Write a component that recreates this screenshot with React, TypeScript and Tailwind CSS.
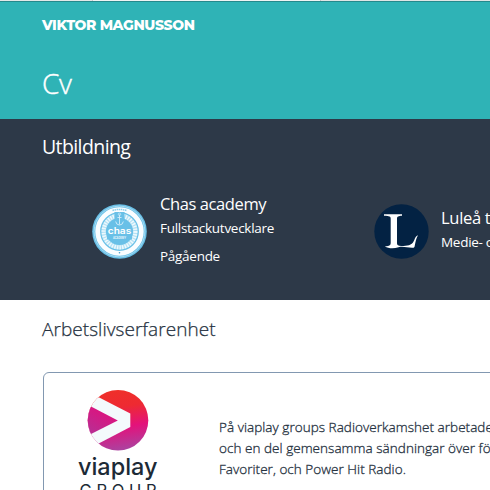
const sans = "font-['Open_Sans','Liberation_Sans',sans-serif]";

function ChasLogo() {
  return (
    <svg className="block h-[55px] w-[55px] shrink-0" viewBox="0 0 55 55">
      <circle cx="27.5" cy="27.500" r="27.300" fill="#69c0e7" />
      <circle cx="27.500" cy="27.500" r="25.400" fill="none" stroke="#a5daf1" strokeWidth="1" />
      <circle cx="27.500" cy="27.500" r="21.800" fill="none" stroke="#fafdff" strokeWidth="4.800" />
      <circle cx="27.500" cy="27.500" r="15.900" fill="none" stroke="#b5e1f4" strokeWidth="4.600" />
      <circle cx="27.500" cy="27.500" r="15.900" fill="none" stroke="#eef9fd" strokeWidth="4" strokeDasharray="1.400 1.200" />
      <path d="M22.500 8h10v12h-10z" fill="#69c0e7" />
      <path d="M20.500 6.500q7-2.200 14 0" fill="none" stroke="#8dcfeb" strokeWidth="1.500" strokeDasharray="1.500 0.600" />
      <path d="M27.500 10.500v10M25.500 13.500h4M23.700 17.500q.5 3.500 3.800 3.500t3.800-3.500" fill="none" stroke="#d4eefa" strokeWidth=".9" />
      <circle cx="27.500" cy="10.300" r="1.200" fill="none" stroke="#d4eefa" strokeWidth=".7" />
      <path d="M15 22.500h25v13H15z" fill="#69c0e7" />
      <text x="27.500" y="30" textAnchor="middle" textLength="23.500" lengthAdjust="spacingAndGlyphs" fill="#fff" className="font-['Inter',sans-serif] text-[9px] font-semibold">chas</text>
      <text x="27.500" y="35" textAnchor="middle" textLength="13" lengthAdjust="spacingAndGlyphs" fill="#e4f5fc" className="font-['Inter',sans-serif] text-[4px] font-bold">ACADEMY</text>
      <circle cx="27.500" cy="48.800" r=".8" fill="#419cc5" />
    </svg>
  );
}

function LuleaLogo() {
  return (
    <svg className="block h-[55px] w-[55px] shrink-0" viewBox="0 0 55 55">
      <circle cx="27.5" cy="27.5" r="27.2" fill="#032243" />
      <path
        d="M10 10.3h18v1.4c-3.5.2-5 .6-5 3v24.5c0 2 1.2 2.6 4.2 2.7 7.2.4 11.3-.8 13.2-6.1.8-2.2 1.5-3.6 3.6-4.5-2 3.500-2.300 6.200-3.400 11.200-.2.9-.8 1.300-1.800 1.300-5.200.2-9.500-1.800-14.300-.5-4.800 1.300-9.900 1.400-13.700-1.100 2.500 0 4.500-.4 5.300-1.300.5-.5.6-1.200.6-2.200V14.700c0-2.300-1-2.900-6.700-3z"
        fill="#fff"
      />
    </svg>
  );
}

function ViaplayLogo() {
  return (
    <svg className="block h-[101px] w-[82px] shrink-0" viewBox="0 0 82 101">
      <defs>
        <linearGradient id="viaplayTop" x1=".35" y1="0" x2=".55" y2="1">
          <stop offset="0" stopColor="#ef3029" />
          <stop offset=".3" stopColor="#ee2a32" />
          <stop offset=".62" stopColor="#e3127b" />
          <stop offset="1" stopColor="#a944a1" />
        </linearGradient>
        <linearGradient id="viaplayInner" x1=".8" y1="0" x2=".2" y2="1">
          <stop offset="0" stopColor="#e60c79" />
          <stop offset="1" stopColor="#b72f94" />
        </linearGradient>
        <clipPath id="viaplayDisc"><circle cx="41" cy="30.3" r="30.3" /></clipPath>
      </defs>
      <g clipPath="url(#viaplayDisc)">
        <path d="M0 0h82v61H0z" fill="url(#viaplayTop)" />
        <path d="M21.7 7.300 53.300 23.500v13.500L21.700 53.500 8 49V12z" fill="#f4fafc" />
        <path d="M14 16.500 40.800 30.500 14 44H8V16z" fill="url(#viaplayInner)" />
      </g>
      <text x="1" y="84.700" textLength="79.500" lengthAdjust="spacingAndGlyphs" fill="#1c2a36" className="font-['Inter',sans-serif] text-[23.5px] font-medium">viaplay</text>
      <text x="2.500" y="106" textLength="77" lengthAdjust="spacing" fill="#1c2a36" className="font-['Inter',sans-serif] text-[16.5px]">GROUP</text>
    </svg>
  );
}

export default function App() {
  return (
    <div className={`flex h-[490px] w-[490px] flex-col overflow-hidden bg-white ${sans}`}>
      <div className="flex h-px shrink-0 bg-[#eff3f3]">
        <div className="w-[92px] bg-[#e3e8e8]" />
        <div className="w-px bg-[#c7cccc]" />
        <div className="grow" />
        <div className="w-px bg-[#c2c7c7]" />
        <div className="w-[169px] bg-[#e0e5e5]" />
      </div>
      <header className="h-[118px] shrink-0 border-t border-[#25898c] bg-[#2fb3b6] pl-[42px] text-white">
        <p className="mt-[13px] h-5 whitespace-nowrap font-['Montserrat','Inter',sans-serif] text-[14px] leading-5 font-extrabold tracking-[-0.4px]">VIKTOR MAGNUSSON</p>
        <h1 className="mt-[28px] text-[28px] leading-10 font-light tracking-[-0.5px] [-webkit-text-stroke:0.4px]">Cv</h1>
      </header>
      <section className="h-[181px] shrink-0 bg-[#2d3948] pl-[42px] text-white">
        <h2 className="pt-[14px] text-[19.5px] leading-7 tracking-[-0.6px]">Utbildning</h2>
        <div className="mt-[31px] flex">
          <div className="flex w-[282px] shrink-0 pl-[50px]">
            <div className="pt-3"><ChasLogo /></div>
            <div className="pl-[13px] whitespace-nowrap">
              <h3 className="text-[16.5px] leading-6 tracking-[-0.4px]">Chas academy</h3>
              <p className="text-[13.5px] leading-6 tracking-[-0.28px]">Fullstackutvecklare</p>
              <p className="mt-1 text-[13.5px] leading-6 tracking-[-0.28px]">Pågående</p>
            </div>
          </div>
          <div className="flex shrink-0 pl-[50px]">
            <div className="pt-3"><LuleaLogo /></div>
            <div className="pt-[14px] pl-[12px] whitespace-nowrap">
              <h3 className="text-[16.5px] leading-6 tracking-[-0.3px]">Luleå tekniska</h3>
              <p className="text-[13.5px] leading-6 tracking-[-0.28px]">Medie- och</p>
            </div>
          </div>
        </div>
      </section>
      <section className="pl-[42px] text-[#253140]">
        <h2 className="pt-[15px] text-[19px] leading-7 font-light tracking-[0.05px] [-webkit-text-stroke:0.25px]">Arbetslivserfarenhet</h2>
        <div className="mt-[29px] ml-px flex h-[150px] w-[600px] rounded-tl-[6px] border border-[#8298b1] pt-[17px] pl-[33px]">
          <ViaplayLogo />
          <p className="mt-[27px] ml-[60px] text-[13.5px] leading-[21px] font-light tracking-[0.04px] whitespace-nowrap [-webkit-text-stroke:0.3px]">
            På viaplay groups Radioverkamshet arbetade<br />
            och en del gemensamma sändningar över för<br />
            Favoriter, och Power Hit Radio.
          </p>
        </div>
      </section>
    </div>
  );
}
